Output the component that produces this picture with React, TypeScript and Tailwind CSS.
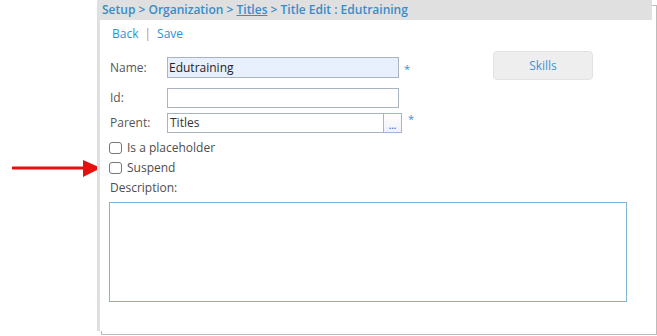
export default function App() {
  return (
    <div
      className="relative w-[657px] h-[336px] bg-white overflow-hidden"
      style={{ fontFamily: '"Open Sans", "Liberation Sans", sans-serif' }}
    >
      {/* offset frame behind the panel */}
      <div className="absolute left-[101px] top-[5px] w-[556px] h-[330px] border border-[#bcbcbc]" />

      {/* red annotation arrow */}
      <svg className="absolute left-0 top-[150px]" width="110" height="36" viewBox="0 0 110 36">
        <rect x="12" y="16.5" width="73" height="3" fill="#e8100c" />
        <polygon points="83,10 101,18 83,27" fill="#e8100c" />
      </svg>

      <div className="relative ml-[97px] w-[555px] h-[331px] bg-white border-l-[3px] border-[#e0e0e0]">
        <div className="h-[20px] bg-[#e0e0e0] pl-[2px] text-[12px] leading-[20px] font-semibold text-[#3a8cc6] whitespace-nowrap">
          Setup &gt; Organization &gt; <span className="underline">Titles</span> &gt; Title Edit : Edutraining
        </div>

        <div className="pl-[12px] mt-[4px] h-[20px] flex items-center text-[12px] leading-[20px] text-[#2f8fd6]">
          <span>Back</span>
          <span className="mx-[6px] text-[#d08a5c]">|</span>
          <span>Save</span>
        </div>

        <div className="pl-[9px]">
          <div className="flex mt-[7px]">
            <div className="w-[310px]">
              <div className="flex mt-[6px] h-[21px] items-center">
                <label className="w-[58px] pl-px text-[12px] text-[#555]">Name:</label>
                <div className="w-[232px] h-[21px] bg-[#e8f0fe] border border-[#a9b4c0] pl-[1px] text-[12px] leading-[19px] text-[#222]">
                  Edutraining
                </div>
                <span className="ml-[5px] mt-[3px] text-[11px] text-[#3a8fd0]">*</span>
              </div>

              <div className="flex mt-[10px] h-[20px] items-center">
                <label className="w-[58px] pl-px text-[12px] text-[#555]">Id:</label>
                <div className="w-[232px] h-[20px] bg-white border border-[#a9b4c0]" />
              </div>

              <div className="flex mt-[5px] h-[20px] items-center">
                <label className="w-[58px] pl-px text-[12px] text-[#555]">Parent:</label>
                <div className="w-[217px] h-[20px] bg-white border border-[#a9b4c0] pl-[2px] text-[12px] leading-[18px] text-[#333]">
                  Titles
                </div>
                <div className="-ml-px w-[19px] h-[20px] border border-[#9db8d2] bg-gradient-to-b from-white to-[#eef1f5] flex items-end justify-center text-[9px] leading-[12px] font-bold text-[#4a7fc0]">
                  ...
                </div>
                <span className="ml-[6px] self-start -mt-[2px] text-[11px] text-[#3a8fd0]">*</span>
              </div>
            </div>

            <button className="ml-[74px] w-[100px] h-[29px] rounded-[4px] bg-[#eeeeee] border border-[#e2e2e2] text-[12px] text-[#3b95d6]">
              Skills
            </button>
          </div>

          <div className="mt-[5px]">
            <label className="flex items-center h-[20px] text-[12px] text-[#4d4d4d]">
              <span className="w-[13px] h-[12px] rounded-[3px] border border-[#777] bg-white mr-[5px]" />
              Is a placeholder
            </label>
            <label className="flex items-center h-[20px] text-[12px] text-[#4d4d4d]">
              <span className="w-[13px] h-[12px] rounded-[3px] border border-[#777] bg-white mr-[5px]" />
              Suspend
            </label>
            <div className="h-[20px] pl-px text-[12px] leading-[20px] text-[#4d4d4d]">Description:</div>
          </div>

          <div className="mt-[4px] w-[518px] h-[100px] border border-[#80b3d4] bg-white" />
        </div>
      </div>
    </div>
  );
}
